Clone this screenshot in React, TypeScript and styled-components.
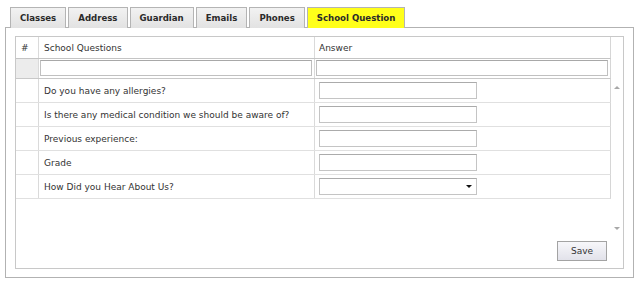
import { createGlobalStyle } from 'styled-components';
import styled from 'styled-components';

const tabs = ['Classes', 'Address', 'Guardian', 'Emails', 'Phones', 'School Question'];

const questions = [
	{ label: 'Do you have any allergies?', kind: 'text' },
	{ label: 'Is there any medical condition we should be aware of?', kind: 'text' },
	{ label: 'Previous experience:', kind: 'text' },
	{ label: 'Grade', kind: 'text' },
	{ label: 'How Did you Hear About Us?', kind: 'select' },
];

const App = () => {
	return (
		<Page>
			<GlobalStyle />
			<TabStrip>
				{tabs.map((t) => (
					<Tab key={t} isActive={t === 'School Question'}>
						{t}
					</Tab>
				))}
			</TabStrip>
			<Panel>
				<Grid>
					<GridMain>
						<Table>
							<HeaderRow>
								<NumCell>#</NumCell>
								<QuestionCell>School Questions</QuestionCell>
								<AnswerCell>Answer</AnswerCell>
							</HeaderRow>
							<FilterRow>
								<NumCell shaded />
								<FilterCell>
									<FilterInput />
								</FilterCell>
								<FilterCell grow>
									<FilterInput />
								</FilterCell>
							</FilterRow>
							{questions.map((q) => (
								<BodyRow key={q.label}>
									<NumCell />
									<QuestionCell>{q.label}</QuestionCell>
									<AnswerCell>
										{q.kind === 'select' ? (
											<SelectBox>
												<SelectArrow />
											</SelectBox>
										) : (
											<AnswerInput />
										)}
									</AnswerCell>
								</BodyRow>
							))}
						</Table>
						<ScrollCol>
							<ArrowUp />
							<ArrowDown />
						</ScrollCol>
					</GridMain>
					<Footer>
						<SaveButton>Save</SaveButton>
					</Footer>
				</Grid>
			</Panel>
		</Page>
	);
};

const GlobalStyle = createGlobalStyle`
	body {
		margin: 0;
		background: #ffffff;
		font-family: "DejaVu Sans", Verdana, sans-serif;
	}
	* {
		box-sizing: border-box;
	}
`;

const Page = styled.div`
	width: 639px;
	height: 283px;
	padding-top: 7px;
	padding-left: 5px;
`;

const TabStrip = styled.div`
	display: flex;
	padding-left: 5px;
	height: 20px;
`;

const Tab = styled.div<{ isActive: boolean }>`
	height: 21px;
	padding: 0 9px;
	margin-right: 2px;
	display: flex;
	align-items: center;
	padding-bottom: 1px;
	font-size: 8.6px;
	font-weight: 700;
	color: #2a2a2a;
	border: 1px solid #b4b4b4;
	border-bottom: none;
	background: ${({ isActive }) =>
		isActive ? '#ffff1a' : 'linear-gradient(#f2f2f2, #e2e2e2)'};
	position: relative;
	z-index: 1;
`;

const Panel = styled.div`
	width: 629px;
	height: 251px;
	border: 1px solid #b2b2b2;
	padding: 8px 9px 8px 9px;
	background: #ffffff;
`;

const Grid = styled.div`
	width: 609px;
	height: 233px;
	border: 1px solid #c8c8c8;
	display: flex;
	flex-direction: column;
`;

const GridMain = styled.div`
	flex: 1;
	display: flex;
`;

const Table = styled.div`
	width: 595px;
	display: flex;
	flex-direction: column;
`;

const Row = styled.div`
	display: flex;
	border-right: 1px solid #d6d6d6;
	font-size: 9px;
	color: #333333;
`;

const HeaderRow = styled(Row)`
	height: 22px;
	border-bottom: 1px solid #c4c4c4;
`;

const FilterRow = styled(Row)`
	height: 20px;
	border-bottom: 1px solid #c8c8c8;
`;

const BodyRow = styled(Row)`
	height: 24px;
	border-bottom: 1px solid #e0e0e0;
`;

const NumCell = styled.div<{ shaded?: boolean }>`
	width: 23px;
	flex-shrink: 0;
	border-right: 1px solid #dadada;
	display: flex;
	align-items: center;
	padding-left: 5px;
	background: ${({ shaded }) => (shaded ? '#ececec' : 'transparent')};
`;

const QuestionCell = styled.div`
	width: 276px;
	flex-shrink: 0;
	border-right: 1px solid #dadada;
	display: flex;
	align-items: center;
	padding-left: 5px;
	white-space: nowrap;
`;

const AnswerCell = styled.div`
	flex: 1;
	display: flex;
	align-items: center;
	padding-left: 4px;
`;

const FilterCell = styled.div<{ grow?: boolean }>`
	width: ${({ grow }) => (grow ? 'auto' : '276px')};
	flex: ${({ grow }) => (grow ? 1 : '0 0 auto')};
	border-right: ${({ grow }) => (grow ? 'none' : '1px solid #dadada')};
	padding: 1px 2px 2px 1px;
	display: flex;
`;

const FilterInput = styled.div`
	flex: 1;
	border: 1px solid #c0c0c0;
	border-top-color: #a8a8a8;
	background: #ffffff;
`;

const AnswerInput = styled.div`
	width: 158px;
	height: 17px;
	border: 1px solid #c4c4c4;
	border-top-color: #ababab;
	background: #ffffff;
`;

const SelectBox = styled(AnswerInput)`
	display: flex;
	align-items: center;
	justify-content: flex-end;
	padding-right: 4px;
`;

const SelectArrow = styled.div`
	width: 0;
	height: 0;
	border-left: 3px solid transparent;
	border-right: 3px solid transparent;
	border-top: 3px solid #111111;
`;

const ScrollCol = styled.div`
	flex: 1;
	display: flex;
	flex-direction: column;
	align-items: center;
	justify-content: space-between;
	padding: 49px 0 6px;
`;

const ArrowUp = styled.div`
	width: 0;
	height: 0;
	border-left: 3px solid transparent;
	border-right: 3px solid transparent;
	border-bottom: 3px solid #a8a8a8;
`;

const ArrowDown = styled.div`
	width: 0;
	height: 0;
	border-left: 3px solid transparent;
	border-right: 3px solid transparent;
	border-top: 3px solid #a8a8a8;
`;

const Footer = styled.div`
	height: 32px;
	display: flex;
	justify-content: flex-end;
	align-items: flex-start;
	padding: 5px 16px 0 0;
`;

const SaveButton = styled.div`
	width: 50px;
	height: 20px;
	border: 1px solid #a3a3a3;
	background: linear-gradient(#f7f7fa, #e2e2ea);
	display: flex;
	align-items: center;
	justify-content: center;
	font-size: 9px;
	color: #333333;
`;

export default App;
